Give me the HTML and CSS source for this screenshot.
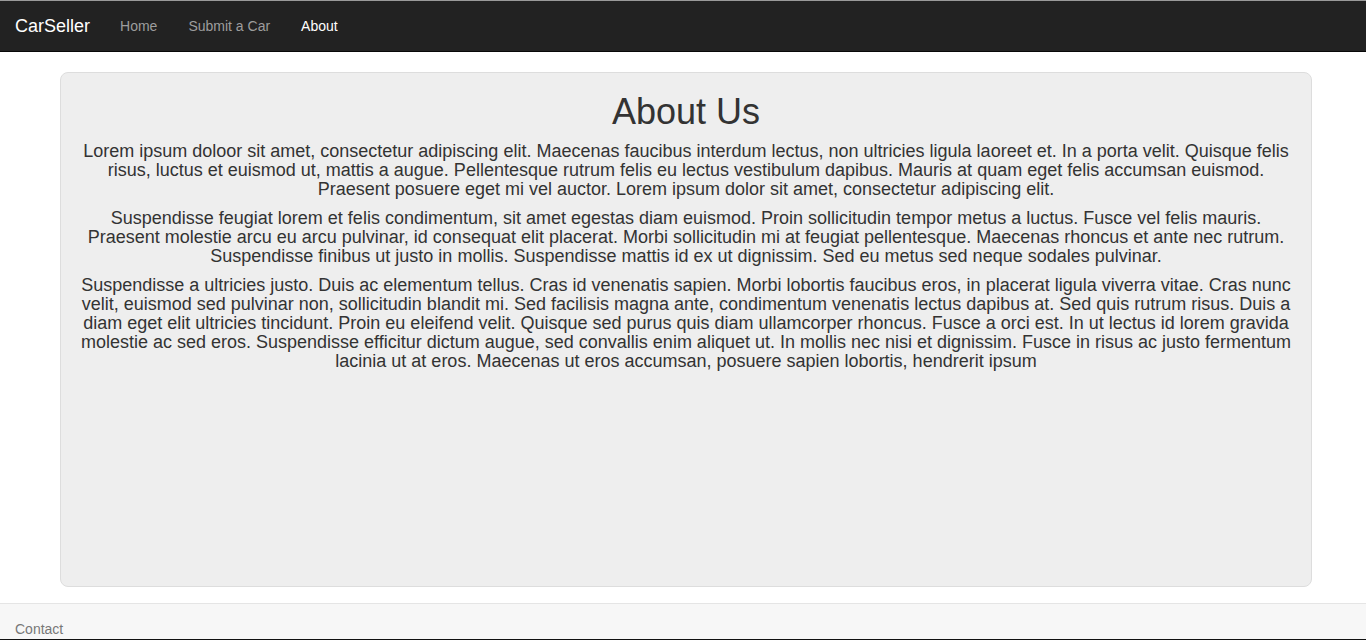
FILE: index.html
```html
<!DOCTYPE html>
<html>
<head>
<meta charset="utf-8">
<title>About - CarSeller</title>
<link rel="stylesheet" href="styles.css">
</head>
<body>
<nav class="navbar">
  <a class="brand" href="#">CarSeller</a>
  <ul class="nav">
    <li><a href="#">Home</a></li>
    <li><a href="#">Submit a Car</a></li>
    <li><a class="active" href="#">About</a></li>
  </ul>
</nav>
<main class="page">
  <section class="jumbotron">
    <h1>About Us</h1>
    <p>Lorem ipsum doloor sit amet, consectetur adipiscing elit. Maecenas faucibus interdum lectus, non ultricies ligula laoreet et. In a porta velit. Quisque felis risus, luctus et euismod ut, mattis a augue. Pellentesque rutrum felis eu lectus vestibulum dapibus. Mauris at quam eget felis accumsan euismod. Praesent posuere eget mi vel auctor. Lorem ipsum dolor sit amet, consectetur adipiscing elit.</p>
    <p>Suspendisse feugiat lorem et felis condimentum, sit amet egestas diam euismod. Proin sollicitudin tempor metus a luctus. Fusce vel felis mauris. Praesent molestie arcu eu arcu pulvinar, id consequat elit placerat. Morbi sollicitudin mi at feugiat pellentesque. Maecenas rhoncus et ante nec rutrum. Suspendisse finibus ut justo in mollis. Suspendisse mattis id ex ut dignissim. Sed eu metus sed neque sodales pulvinar.</p>
    <p>Suspendisse a ultricies justo. Duis ac elementum tellus. Cras id venenatis sapien. Morbi lobortis faucibus eros, in placerat ligula viverra vitae. Cras nunc velit, euismod sed pulvinar non, sollicitudin blandit mi. Sed facilisis magna ante, condimentum venenatis lectus dapibus at. Sed quis rutrum risus. Duis a diam eget elit ultricies tincidunt. Proin eu eleifend velit. Quisque sed purus quis diam ullamcorper rhoncus. Fusce a orci est. In ut lectus id lorem gravida molestie ac sed eros. Suspendisse efficitur dictum augue, sed convallis enim aliquet ut. In mollis nec nisi et dignissim. Fusce in risus ac justo fermentum lacinia ut at eros. Maecenas ut eros accumsan, posuere sapien lobortis, hendrerit ipsum</p>
  </section>
</main>
<footer class="footer">
  <span class="footer-link">Contact</span>
</footer>
</body>
</html>
```

FILE: styles.css
```css
* { box-sizing: border-box; }
html, body { margin: 0; padding: 0; }
body {
  font-family: "Liberation Sans", Arial, sans-serif;
  font-size: 14px;
  color: #333;
  background: #fff;
  height: 640px;
  display: flex;
  flex-direction: column;
  overflow: hidden;
}
.navbar {
  height: 52px;
  background: #222;
  border-top: 1px solid #9a9a9a;
  border-bottom: 1px solid #080808;
  display: flex;
  align-items: center;
  padding: 0 0 0 15px;
}
.brand {
  color: #fff;
  font-size: 18px;
  text-decoration: none;
  margin-right: 15px;
}
.nav {
  list-style: none;
  margin: 0;
  padding: 0;
  display: flex;
}
.nav a {
  display: block;
  padding: 0 15px;
  color: #9d9d9d;
  text-decoration: none;
  font-size: 14px;
}
.nav li + li { margin-left: 1px; }
.nav a.active { color: #fff; }
.page {
  flex: 1;
  padding: 20px 54px 16px 60px;
  display: flex;
}
.jumbotron {
  flex: 1;
  background: #eee;
  border: 1px solid #ddd;
  border-radius: 8px;
  padding: 0 17px 0 17px;
  text-align: center;
}
.jumbotron h1 {
  font-size: 36px;
  font-weight: 500;
  line-height: 40px;
  margin: 19px 0 10px;
}
.jumbotron p {
  font-size: 18px;
  line-height: 19px;
  margin: 0 0 10px;
}
.footer {
  height: 37px;
  background: #f7f7f7;
  border-top: 1px solid #e5e5e5;
  border-bottom: 1px solid #111;
  padding: 17px 15px 0;
  flex-shrink: 0;
}
.footer-link {
  color: #777;
  font-size: 14px;
  line-height: 16px;
  display: block;
}
```
